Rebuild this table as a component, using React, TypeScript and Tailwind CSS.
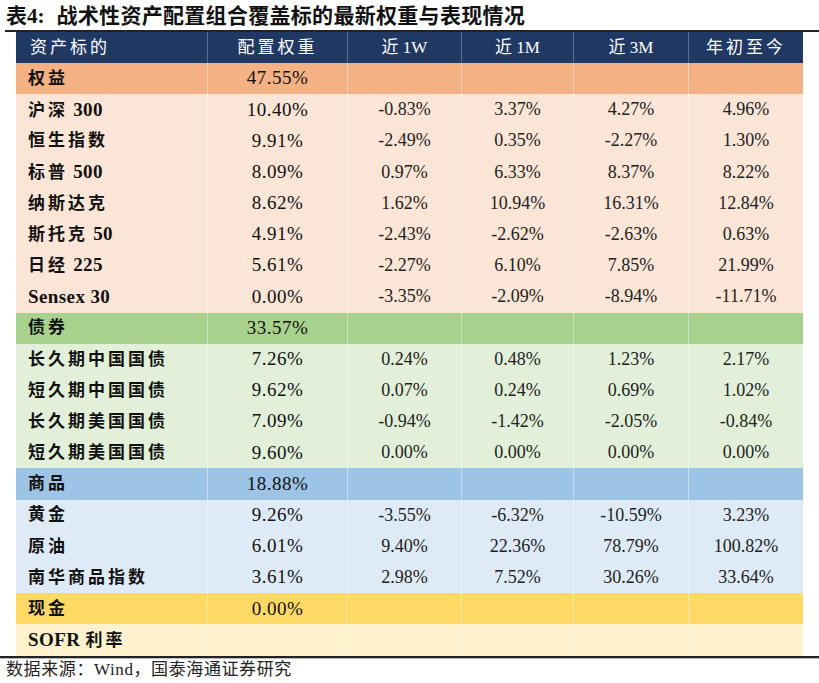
import React from "react";

type Row = { name: string; w: string; v: string[]; group?: boolean };

const sections: { dark: string; light: string; rows: Row[] }[] = [
  {
    dark: "bg-[#f4b183]",
    light: "bg-[#fbe5d6]",
    rows: [
      { name: "权益", w: "47.55%", v: ["", "", "", ""], group: true },
      { name: "沪深 300", w: "10.40%", v: ["-0.83%", "3.37%", "4.27%", "4.96%"] },
      { name: "恒生指数", w: "9.91%", v: ["-2.49%", "0.35%", "-2.27%", "1.30%"] },
      { name: "标普 500", w: "8.09%", v: ["0.97%", "6.33%", "8.37%", "8.22%"] },
      { name: "纳斯达克", w: "8.62%", v: ["1.62%", "10.94%", "16.31%", "12.84%"] },
      { name: "斯托克 50", w: "4.91%", v: ["-2.43%", "-2.62%", "-2.63%", "0.63%"] },
      { name: "日经 225", w: "5.61%", v: ["-2.27%", "6.10%", "7.85%", "21.99%"] },
      { name: "Sensex 30", w: "0.00%", v: ["-3.35%", "-2.09%", "-8.94%", "-11.71%"] },
    ],
  },
  {
    dark: "bg-[#a9d18e]",
    light: "bg-[#e2f0d9]",
    rows: [
      { name: "债券", w: "33.57%", v: ["", "", "", ""], group: true },
      { name: "长久期中国国债", w: "7.26%", v: ["0.24%", "0.48%", "1.23%", "2.17%"] },
      { name: "短久期中国国债", w: "9.62%", v: ["0.07%", "0.24%", "0.69%", "1.02%"] },
      { name: "长久期美国国债", w: "7.09%", v: ["-0.94%", "-1.42%", "-2.05%", "-0.84%"] },
      { name: "短久期美国国债", w: "9.60%", v: ["0.00%", "0.00%", "0.00%", "0.00%"] },
    ],
  },
  {
    dark: "bg-[#9dc3e6]",
    light: "bg-[#deebf7]",
    rows: [
      { name: "商品", w: "18.88%", v: ["", "", "", ""], group: true },
      { name: "黄金", w: "9.26%", v: ["-3.55%", "-6.32%", "-10.59%", "3.23%"] },
      { name: "原油", w: "6.01%", v: ["9.40%", "22.36%", "78.79%", "100.82%"] },
      { name: "南华商品指数", w: "3.61%", v: ["2.98%", "7.52%", "30.26%", "33.64%"] },
    ],
  },
  {
    dark: "bg-[#ffd966]",
    light: "bg-[#fff2cc]",
    rows: [
      { name: "现金", w: "0.00%", v: ["", "", "", ""], group: true },
      { name: "SOFR 利率", w: "", v: ["", "", "", ""] },
    ],
  },
];

const font = { fontFamily: '"Liberation Serif", "Noto Sans CJK SC", serif' };
const cols = "grid grid-cols-[192px_140px_114px_112px_115px_114px]";

// only the Chinese runs get the wide letter spacing, latin stays tight
function Spaced({ text }: { text: string }) {
  const parts = text.split(/([\u4e00-\u9fff]+)/).filter(Boolean);
  return (
    <span className="whitespace-pre">
      {parts.map((p, i) =>
        /[\u4e00-\u9fff]/.test(p) ? (
          <span key={i} className="tracking-[3px]">{p}</span>
        ) : (
          <span key={i} className="text-[19px] tracking-[0.4px]">{p}</span>
        )
      )}
    </span>
  );
}

export default function App() {
  return (
    <div className="w-[819px] h-[683px] bg-white text-[#111] overflow-hidden" style={font}>
      <div className="h-[30px] pl-[6px] pt-[3px] flex items-center text-[21px] font-bold leading-none">
        <span>表4:</span>
        <span className="ml-[12px] tracking-[0.3px]">战术性资产配置组合覆盖标的最新权重与表现情况</span>
      </div>
      <div className="ml-[5px] h-[2px] bg-[#222]" />
      <div className="ml-[16px] w-[787px]">
        <div className={`${cols} h-[31px] bg-[#1f3864] text-white text-[17px]`}>
          <div className="flex items-center pl-[14px] tracking-[3px] border-r border-[#5a6e96]">资产标的</div>
          <div className="flex items-center justify-center tracking-[3px] border-r border-[#5a6e96]">配置权重</div>
          <div className="flex items-center justify-center border-r border-[#5a6e96]">近 1W</div>
          <div className="flex items-center justify-center border-r border-[#5a6e96]">近 1M</div>
          <div className="flex items-center justify-center border-r border-[#5a6e96]">近 3M</div>
          <div className="flex items-center justify-center tracking-[3px]">年初至今</div>
        </div>
        {sections.map((s) =>
          s.rows.map((r) => (
            <div key={r.name} className={`${cols} h-[31.2px] ${r.group ? s.dark : s.light}`}>
              <div className="flex items-center pl-[12px] text-[17px] font-semibold border-r border-white/40">
                <Spaced text={r.name} />
              </div>
              <div className="flex items-center justify-center text-[19px] tracking-[0.5px] border-r border-white/40">
                {r.w}
              </div>
              {r.v.map((x, i) => (
                <div
                  key={i}
                  className={`flex items-center justify-center text-[18px] text-[#222] ${i < 3 ? "border-r border-white/40" : ""}`}
                >
                  {x}
                </div>
              ))}
            </div>
          ))
        )}
      </div>
      <div className="h-[2px] bg-[#222]" />
      <div className="h-[1px] bg-[#bbb]" />
      <div className="pl-[6px] pt-[1px] text-[17px] tracking-[0.6px] leading-[20px] text-[#222]">
        数据来源：Wind，国泰海通证券研究
      </div>
    </div>
  );
}
